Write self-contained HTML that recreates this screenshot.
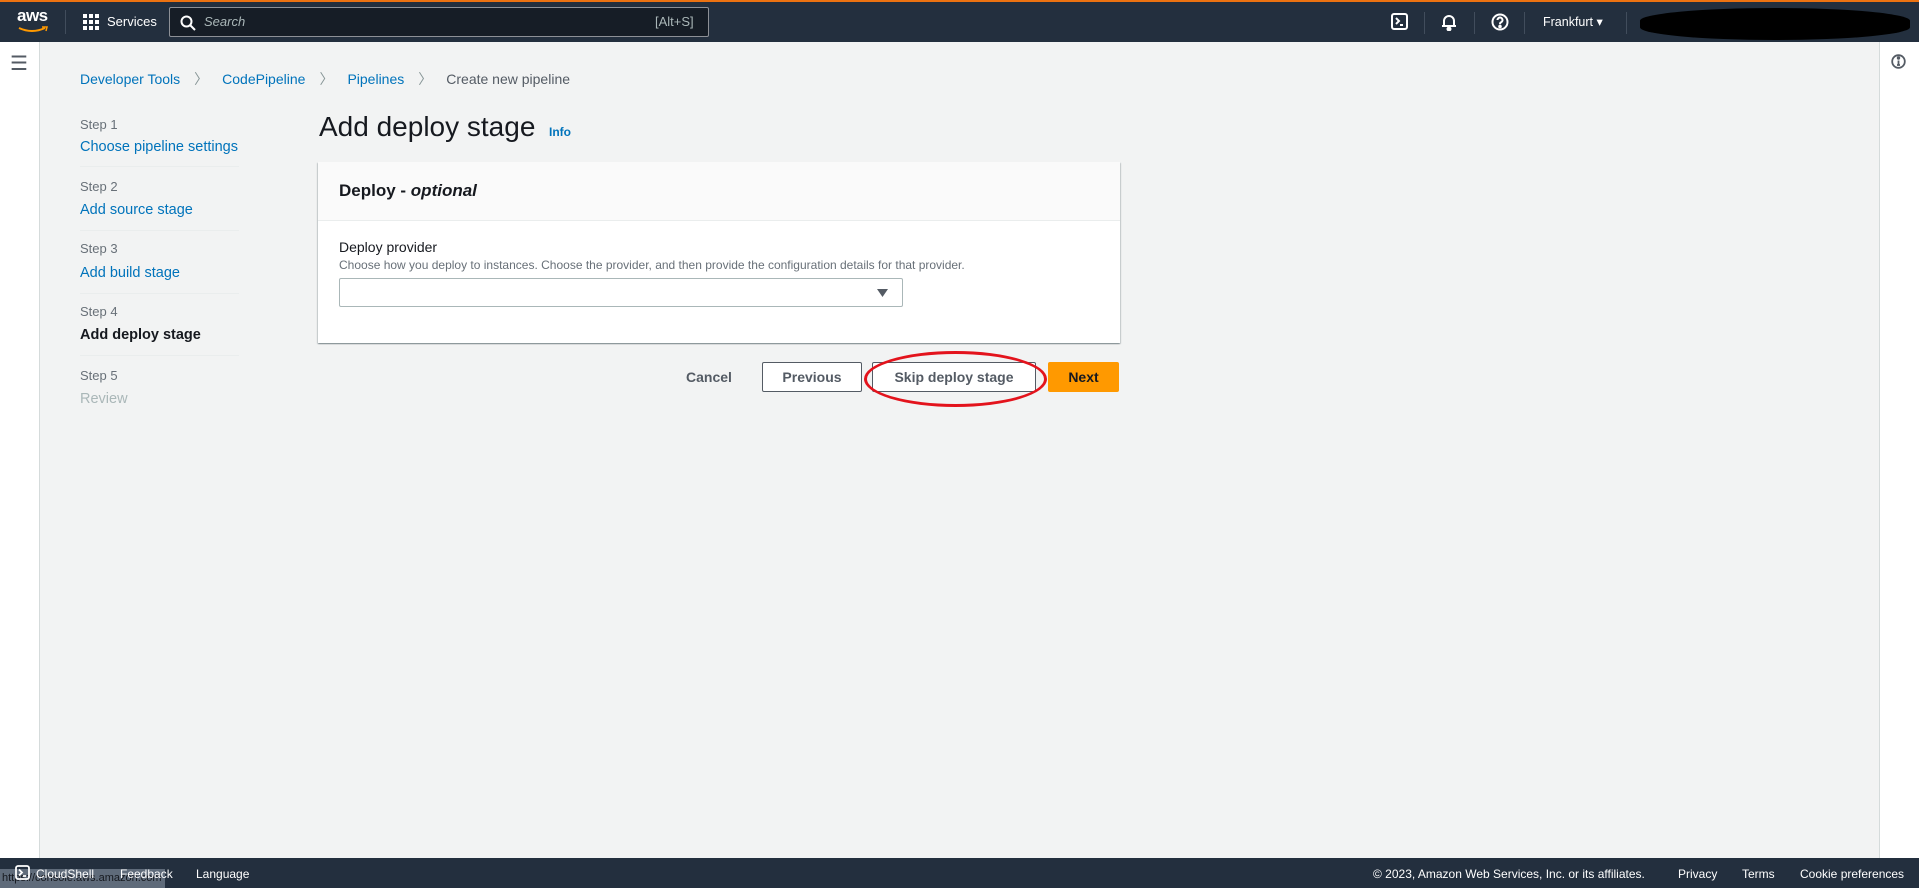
<!DOCTYPE html>
<html><head><meta charset="utf-8"><style>
*{margin:0;padding:0;box-sizing:border-box}
body{width:1919px;height:888px;overflow:hidden;background:#f2f3f3;font-family:"Liberation Sans",Arial,sans-serif;position:relative;color:#16191f}
.a{position:absolute;white-space:nowrap}
#hdr{position:absolute;left:0;top:0;width:1919px;height:42px;background:#232f3e;border-top:2px solid #ec7211}
.w{color:#fff;font-size:13px}
.lnk{color:#0073bb}
.step{color:#687078;font-size:13px}
.div{position:absolute;left:80px;width:159px;height:1px;background:#eaeded}
.btn{position:absolute;height:30px;top:362px;font-weight:bold;font-size:14px;display:flex;align-items:center;justify-content:center;color:#545b64}
</style></head><body>
<div id="hdr">
 <div class="a" style="left:17px;top:4px;color:#fff;font-size:17px;font-weight:bold;letter-spacing:-0.5px">aws</div>
 <svg class="a" style="left:17px;top:24px" width="32" height="8"><path d="M2 2 Q15 8 28 2" stroke="#ff9900" stroke-width="2" fill="none"/><path d="M25 1 L30 1 L29 5" stroke="#ff9900" stroke-width="1.5" fill="none"/></svg>
 <div class="a" style="left:65px;top:8px;width:1px;height:24px;background:#414d5c"></div>
 <svg class="a" style="left:83px;top:12px" width="16" height="16" fill="#fff"><rect x="0" y="0" width="4" height="4"/><rect x="6" y="0" width="4" height="4"/><rect x="12" y="0" width="4" height="4"/><rect x="0" y="6" width="4" height="4"/><rect x="6" y="6" width="4" height="4"/><rect x="12" y="6" width="4" height="4"/><rect x="0" y="12" width="4" height="4"/><rect x="6" y="12" width="4" height="4"/><rect x="12" y="12" width="4" height="4"/></svg>
 <div class="a w" style="left:107px;top:12px">Services</div>
 <div class="a" style="left:169px;top:5px;width:540px;height:30px;border:1px solid #8d9096;background:#161d26;border-radius:2px"></div>
 <svg class="a" style="left:180px;top:13px" width="16" height="16" fill="none" stroke="#fff" stroke-width="2"><circle cx="6.5" cy="6.5" r="5"/><path d="M10 10 L15 15"/></svg>
 <div class="a" style="left:204px;top:12px;color:#aab7b8;font-size:13px;font-style:italic">Search</div>
 <div class="a" style="left:655px;top:12px;color:#aab7b8;font-size:13px">[Alt+S]</div>
 <svg class="a" style="left:1391px;top:11px" width="17" height="17" fill="none" stroke="#fff" stroke-width="2"><rect x="1" y="1" width="15" height="15" rx="2"/><path d="M5 5 L8 8 L5 11 M9 12 H12"/></svg>
 <div class="a" style="left:1424px;top:10px;width:1px;height:22px;background:#414d5c"></div>
 <svg class="a" style="left:1441px;top:11px" width="16" height="18" fill="none" stroke="#fff" stroke-width="2"><path d="M3 13 V8 a5 5 0 0 1 10 0 V13 Z M1 13 H15"/><circle cx="8" cy="16" r="1.5" fill="#fff"/></svg>
 <div class="a" style="left:1474px;top:10px;width:1px;height:22px;background:#414d5c"></div>
 <svg class="a" style="left:1491px;top:11px" width="18" height="18" fill="none" stroke="#fff" stroke-width="2"><circle cx="9" cy="9" r="7.5"/><path d="M6.5 7 a2.5 2.5 0 1 1 3.5 2.3 c-1 .4-1 1-1 2"/><circle cx="9" cy="13.5" r=".8" fill="#fff"/></svg>
 <div class="a" style="left:1524px;top:10px;width:1px;height:22px;background:#414d5c"></div>
 <div class="a w" style="left:1543px;top:12px;font-size:12.5px">Frankfurt ▾</div>
 <div class="a" style="left:1626px;top:10px;width:1px;height:22px;background:#414d5c"></div>
 <div class="a" style="left:1640px;top:6px;width:270px;height:32px;background:#000;border-radius:50%/40%"></div>
</div>
<div class="a" style="left:0;top:42px;width:40px;height:816px;background:#fff;border-right:1px solid #d5dbdb"></div>
<div class="a" style="left:10px;top:51px;font-size:20px;color:#545b64">☰</div>
<div class="a" style="left:1879px;top:42px;width:40px;height:816px;background:#fff;border-left:1px solid #d5dbdb"></div>
<svg class="a" style="left:1891px;top:54px" width="15" height="15" fill="none" stroke="#545b64" stroke-width="1.8"><circle cx="7.5" cy="7.5" r="6.3"/><path d="M7.5 6.5 V11 M6 11 H9"/><circle cx="7.5" cy="4" r=".8" fill="#545b64"/></svg>

<div class="a" style="left:80px;top:69px;font-size:14px"><span class="lnk">Developer Tools</span><span style="color:#879596;margin:0 14px">〉</span><span class="lnk">CodePipeline</span><span style="color:#879596;margin:0 14px">〉</span><span class="lnk">Pipelines</span><span style="color:#879596;margin:0 14px">〉</span><span style="color:#545b64">Create new pipeline</span></div>

<div class="a step" style="left:80px;top:117px">Step 1</div>
<div class="a lnk" style="left:80px;top:139px;font-size:14.5px">Choose pipeline settings</div>
<div class="div" style="top:166px"></div>
<div class="a step" style="left:80px;top:179px">Step 2</div>
<div class="a lnk" style="left:80px;top:202px;font-size:14.5px">Add source stage</div>
<div class="div" style="top:230px"></div>
<div class="a step" style="left:80px;top:241px">Step 3</div>
<div class="a lnk" style="left:80px;top:265px;font-size:14.5px">Add build stage</div>
<div class="div" style="top:293px"></div>
<div class="a step" style="left:80px;top:304px">Step 4</div>
<div class="a" style="left:80px;top:327px;font-size:14.5px;font-weight:bold">Add deploy stage</div>
<div class="div" style="top:355px"></div>
<div class="a step" style="left:80px;top:368px">Step 5</div>
<div class="a" style="left:80px;top:391px;font-size:14.5px;color:#aab7b8">Review</div>

<div class="a" style="left:319px;top:111px;font-size:28px">Add deploy stage</div>
<div class="a lnk" style="left:549px;top:125px;font-size:12px;font-weight:bold">Info</div>

<div class="a" style="left:318px;top:162px;width:802px;height:181px;background:#fff;box-shadow:0 1px 1px rgba(0,28,36,.3),1px 1px 1px rgba(0,28,36,.15),-1px 1px 1px rgba(0,28,36,.15)">
 <div style="height:59px;background:#fafafa;border-bottom:1px solid #eaeded"></div>
 <div class="a" style="left:21px;top:19px;font-size:17px;font-weight:bold">Deploy - <i>optional</i></div>
 <div class="a" style="left:21px;top:77px;font-size:14px">Deploy provider</div>
 <div class="a" style="left:21px;top:96px;font-size:12px;color:#687078">Choose how you deploy to instances. Choose the provider, and then provide the configuration details for that provider.</div>
 <div class="a" style="left:21px;top:116px;width:564px;height:29px;border:1px solid #aab7b8;border-radius:2px"></div>
 <svg class="a" style="left:559px;top:127px" width="11" height="8"><path d="M0 0 H11 L5.5 8Z" fill="#545b64"/></svg>
</div>

<div class="btn" style="left:676px;width:66px">Cancel</div>
<div class="btn" style="left:762px;width:100px;border:1px solid #545b64;background:#fff;border-radius:2px">Previous</div>
<div class="btn" style="left:872px;width:164px;border:1px solid #545b64;background:#fff;border-radius:2px">Skip deploy stage</div>
<div class="btn" style="left:1048px;width:71px;background:#ff9900;color:#16191f;border-radius:2px">Next</div>
<div class="a" style="left:864px;top:351px;width:183px;height:56px;border:3px solid #e3131c;border-radius:50%"></div>

<div class="a" style="left:0;top:858px;width:1919px;height:30px;background:#232f3e"></div>
<div class="a" style="left:0;top:869px;width:165px;height:19px;background:#5f6b7a"></div>
<div class="a" style="left:2px;top:872px;font-size:11px;color:#16191f">https://console.aws.amazon.com</div>
<svg class="a" style="left:15px;top:865px" width="15" height="15" fill="none" stroke="#fff" stroke-width="1.8"><rect x="1" y="1" width="13" height="13" rx="2"/><path d="M4 4.5 L7 7.5 L4 10.5 M8 11 H11"/></svg>
<div class="a w" style="left:36px;top:867px;font-size:12px">CloudShell</div>
<div class="a w" style="left:120px;top:867px;font-size:12px">Feedback</div>
<div class="a w" style="left:196px;top:867px;font-size:12px">Language</div>
<div class="a w" style="left:1373px;top:867px;font-size:12px">© 2023, Amazon Web Services, Inc. or its affiliates.</div>
<div class="a w" style="left:1678px;top:867px;font-size:12px">Privacy</div>
<div class="a w" style="left:1742px;top:867px;font-size:12px">Terms</div>
<div class="a w" style="left:1800px;top:867px;font-size:12px">Cookie preferences</div>
</body></html>
